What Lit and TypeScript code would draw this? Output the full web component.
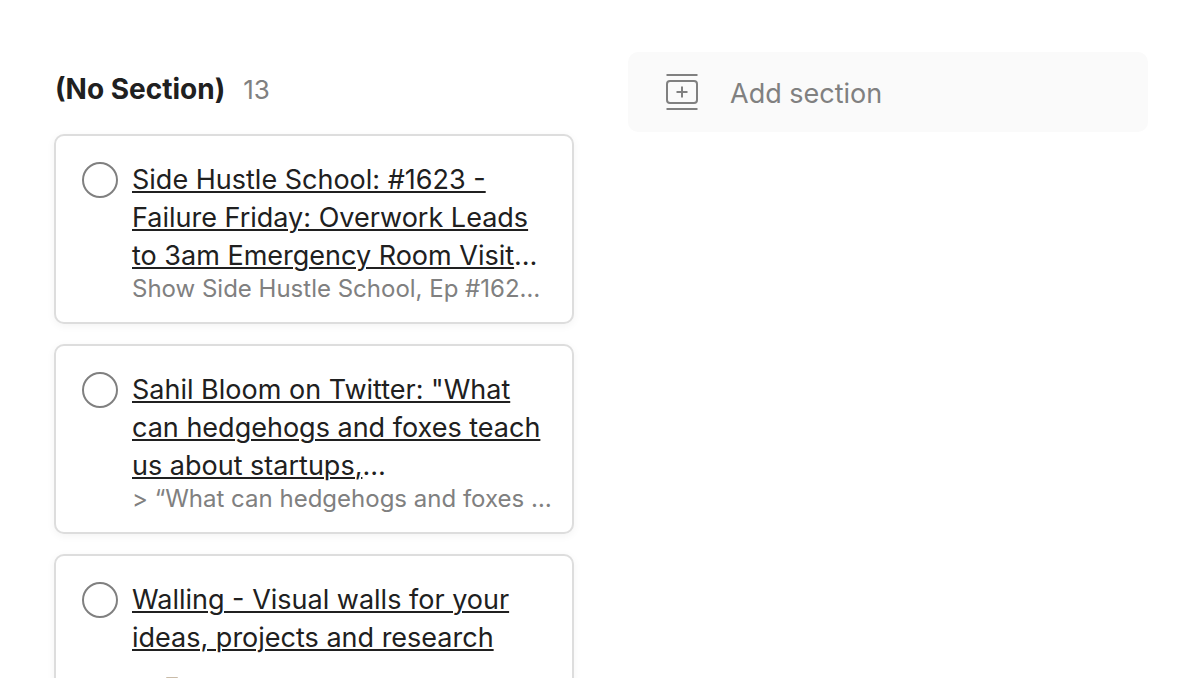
import { LitElement, html, css, nothing } from "lit";
import { customElement, property } from "lit/decorators.js";

interface Task {
  id: string;
  title: string;
  clipped?: boolean;
  note: string;
  emoji?: boolean;
}

const TASKS: Task[] = [
  {
    id: "side-hustle",
    title: "Side Hustle School: #1623 - Failure Friday: Overwork Leads to 3am Emergency Room Visit",
    clipped: true,
    note: "Show Side Hustle School, Ep #162…",
  },
  {
    id: "hedgehogs",
    title: 'Sahil Bloom on Twitter: "What can hedgehogs and foxes teach us about startups,',
    clipped: true,
    note: "> “What can hedgehogs and foxes …",
  },
  {
    id: "walling",
    title: "Walling - Visual walls for your ideas, projects and research",
    note: "",
    emoji: true,
  },
];

@customElement("task-card")
export class TaskCard extends LitElement {
  @property({ attribute: false }) task!: Task;

  static styles = css`
    :host {
      display: block;
    }
    .card {
      box-sizing: border-box;
      display: flex;
      align-items: flex-start;
      gap: 14px;
      min-height: 190px;
      padding: 25px 20px 19px 26px;
      border: 2px solid #dddddd;
      border-radius: 10px;
      background: #ffffff;
      box-shadow: 0 2px 8px rgba(0, 0, 0, 0.05);
    }
    .check {
      appearance: none;
      flex: none;
      box-sizing: border-box;
      width: 36px;
      height: 36px;
      margin: 1px 0 0;
      border: 2px solid #808080;
      border-radius: 50%;
    }
    .check:checked {
      background: #808080;
    }
    .body {
      flex: 1;
      min-width: 0;
    }
    .title {
      font-size: 27px;
      line-height: 38px;
      color: #202020;
    }
    .link {
      color: inherit;
      text-decoration: underline;
      text-decoration-thickness: 2px;
      text-underline-offset: 2px;
    }
    .note {
      min-height: 28px;
      font-size: 24px;
      line-height: 28px;
      color: #808080;
      white-space: nowrap;
    }
    .emoji {
      display: block;
      margin: 20px 0 0 28px;
    }
  `;

  render() {
    const { id, title, clipped, note, emoji } = this.task;
    return html`
      <article class="card">
        <input class="check" type="checkbox" id=${id} aria-labelledby="title" />
        <div class="body">
          <div class="title" id="title"><a class="link" href="#">${title}</a>${clipped ? "…" : nothing}</div>
          <div class="note">
            ${emoji
              ? html`<svg class="emoji" width="24" height="24" viewBox="0 0 24 24" aria-hidden="true">
                  <rect x="6" y="0" width="12" height="24" rx="1" fill="#c9bba8" />
                </svg>`
              : note}
          </div>
        </div>
      </article>
    `;
  }
}

@customElement("app-root")
export class AppRoot extends LitElement {
  static styles = css`
    :host {
      display: block;
      box-sizing: border-box;
      height: 100vh;
      overflow: hidden;
      background: #ffffff;
      font-family: Inter, "Liberation Sans", sans-serif;
    }
    .board {
      display: flex;
      align-items: flex-start;
      gap: 54px;
      padding: 52px 52px 0 54px;
    }
    .column {
      flex: 1 1 0;
      min-width: 0;
    }
    .header {
      display: flex;
      align-items: baseline;
      gap: 18px;
      padding: 18px 0 25px 1px;
      line-height: 38px;
    }
    .name {
      margin: 0;
      font-size: 28px;
      font-weight: 700;
      color: #202020;
    }
    .count {
      font-size: 26px;
      color: #808080;
    }
    .list {
      display: flex;
      flex-direction: column;
      gap: 20px;
    }
    .add {
      display: flex;
      align-items: center;
      gap: 32px;
      width: 100%;
      height: 80px;
      padding: 2px 38px 0;
      border: 0;
      border-radius: 10px;
      background: #fafafa;
      color: #808080;
      font-family: inherit;
      font-size: 27px;
      text-align: left;
    }
    .icon {
      flex: none;
      margin-bottom: 2px;
    }
  `;

  render() {
    return html`
      <main class="board">
        <section class="column">
          <header class="header">
            <h2 class="name">(No Section)</h2>
            <span class="count">13</span>
          </header>
          <div class="list">${TASKS.map((task) => html`<task-card .task=${task}></task-card>`)}</div>
        </section>
        <section class="column">
          <button class="add" type="button">
            <svg class="icon" width="32" height="36" viewBox="0 0 32 36" fill="none" stroke="currentColor" stroke-width="2" aria-hidden="true">
              <path d="M0.5 1h31M0.5 35h31M10.5 18h11M16 12.5v11" />
              <rect x="1" y="7" width="30" height="22" rx="3" />
            </svg>
            Add section
          </button>
        </section>
      </main>
    `;
  }
}
